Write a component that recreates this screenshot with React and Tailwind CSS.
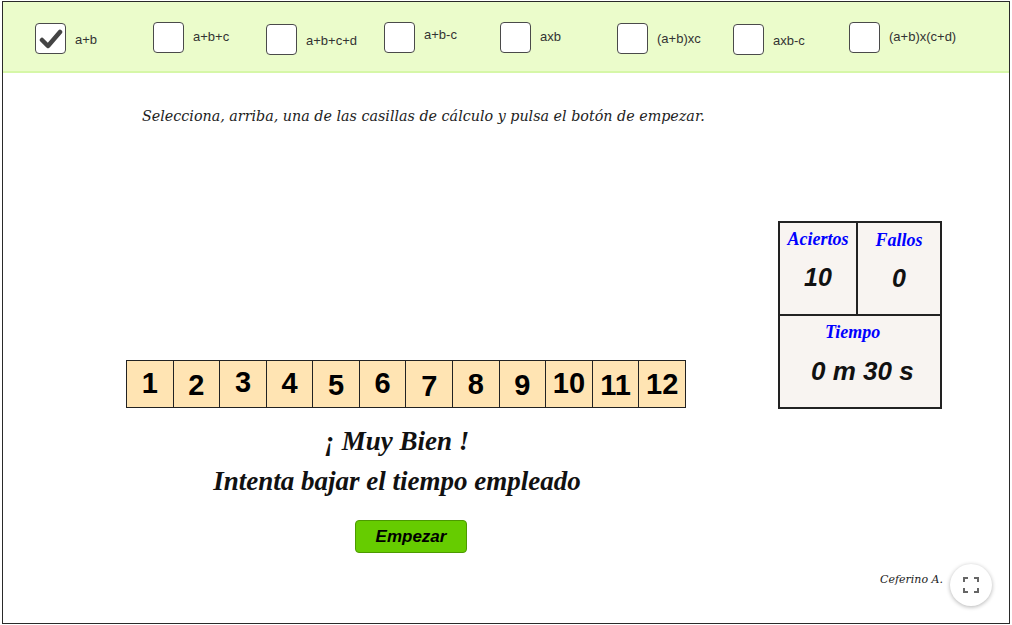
import React, { useState } from 'react';

const options = [
  { label: 'a+b', w: 'w-[118px]', mt: 'mt-[21px]', lmt: 'mt-[10px]' },
  { label: 'a+b+c', w: 'w-[113px]', mt: 'mt-[20px]', lmt: 'mt-[8px]' },
  { label: 'a+b+c+d', w: 'w-[118px]', mt: 'mt-[22px]', lmt: 'mt-[10px]' },
  { label: 'a+b-c', w: 'w-[116px]', mt: 'mt-[20px]', lmt: 'mt-[6px]' },
  { label: 'axb', w: 'w-[117px]', mt: 'mt-[20px]', lmt: 'mt-[8px]' },
  { label: '(a+b)xc', w: 'w-[116px]', mt: 'mt-[21px]', lmt: 'mt-[9px]' },
  { label: 'axb-c', w: 'w-[116px]', mt: 'mt-[22px]', lmt: 'mt-[10px]' },
  { label: '(a+b)x(c+d)', w: 'w-[140px]', mt: 'mt-[20px]', lmt: 'mt-[8px]' },
];

const cells = [
  { n: 1, y: 'pt-[7px]' },
  { n: 2, y: 'pt-[9px]' },
  { n: 3, y: 'pt-[6px]' },
  { n: 4, y: 'pt-[7px]' },
  { n: 5, y: 'pt-[9px]' },
  { n: 6, y: 'pt-[7px]' },
  { n: 7, y: 'pt-[10px]' },
  { n: 8, y: 'pt-[8px]' },
  { n: 9, y: 'pt-[9px]' },
  { n: 10, y: 'pt-[7px]' },
  { n: 11, y: 'pt-[9px]' },
  { n: 12, y: 'pt-[8px]' },
];

const serif = { fontFamily: '"Liberation Serif", "Times New Roman", serif' };
const sans = { fontFamily: '"Liberation Sans", Arial, sans-serif' };
const book = { fontFamily: '"DejaVu Serif", Georgia, serif' };

function CheckBox({ checked, onClick }) {
  return (
    <button
      onClick={onClick}
      className="w-[31px] h-[31px] rounded-[4px] border-[1.5px] border-[#4a4a4a] bg-white flex items-center justify-center flex-shrink-0"
    >
      {checked && (
        <svg width="24" height="22" viewBox="0 0 24 22">
          <path d="M3 12 L9 18 L21 4" fill="none" stroke="#444" strokeWidth="4.5" strokeLinecap="round" strokeLinejoin="round" />
        </svg>
      )}
    </button>
  );
}

export default function App() {
  const [selected, setSelected] = useState(0);

  return (
    <div className="w-[1012px] h-[625px] bg-white pl-[2px] pt-[1px] overflow-hidden">
      <div className="w-[1008px] h-[623px] border border-[#2a2a2a] flex flex-col relative">
        {/* Top options bar */}
        <div className="h-[71px] bg-[#ebfccb] border-b-2 border-[#d6f7a8] flex items-start pl-[32px] flex-shrink-0">
          {options.map((o, i) => (
            <div key={o.label} className={`flex items-start flex-shrink-0 ${o.w} ${o.mt}`}>
              <CheckBox checked={selected === i} onClick={() => setSelected(i)} />
              <span
                className={`ml-[9px] ${o.lmt} text-[13px] leading-[14px] text-[#333] whitespace-nowrap`}
                style={sans}
              >
                {o.label}
              </span>
            </div>
          ))}
        </div>

        {/* Instructions */}
        <p className="mt-[34px] pl-[139px] text-[14.3px] leading-[18px] italic text-[#222]" style={book}>
          Selecciona, arriba, una de las casillas de cálculo y pulsa el botón de empezar.
        </p>

        <div className="flex items-start mt-[96px]">
          {/* Left column */}
          <div className="ml-[123px] w-[560px] pt-[139px] flex flex-col">
            <div className="flex border border-[#222] bg-[#ffe4b3] h-[48px]">
              {cells.map((c, i) => (
                <div
                  key={c.n}
                  className={`flex-1 flex justify-center ${c.y} ${i > 0 ? 'border-l border-[#222]' : ''}`}
                >
                  <span className="text-[29px] leading-[30px] font-bold text-black" style={sans}>
                    {c.n}
                  </span>
                </div>
              ))}
            </div>

            <div className="w-[542px] text-center italic font-bold text-[27px] text-[#111]" style={serif}>
              <div className="mt-[18px] leading-[30px]">¡ Muy Bien !</div>
              <div className="mt-[10px] leading-[30px]">Intenta bajar el tiempo empleado</div>
            </div>

            <button
              className="ml-[229px] mt-[24px] w-[112px] h-[33px] rounded-[4px] bg-[#66cc00] border border-[#4c9a00] text-[17px] font-bold italic text-black"
              style={sans}
            >
              Empezar
            </button>
          </div>

          {/* Score box */}
          <div className="ml-[92px] w-[164px] h-[188px] border-2 border-[#222] bg-[#f8f4f1] flex flex-col">
            <div className="flex h-[93px] border-b-2 border-[#222]">
              <div className="w-[78px] border-r-2 border-[#222] flex flex-col items-center">
                <span className="mt-[6px] text-[18px] leading-[20px] font-bold italic text-[#0000ff]" style={serif}>
                  Aciertos
                </span>
                <span className="mt-[14px] text-[25px] leading-[28px] font-bold italic text-[#111]" style={sans}>
                  10
                </span>
              </div>
              <div className="flex-1 flex flex-col items-center">
                <span className="mt-[7px] text-[18px] leading-[20px] font-bold italic text-[#0000ff]" style={serif}>
                  Fallos
                </span>
                <span className="mt-[14px] text-[25px] leading-[28px] font-bold italic text-[#111]" style={sans}>
                  0
                </span>
              </div>
            </div>
            <div className="flex flex-col">
              <span className="mt-[6px] ml-[45px] text-[18px] leading-[20px] font-bold italic text-[#0000ff]" style={serif}>
                Tiempo
              </span>
              <span className="mt-[15px] ml-[31px] text-[26px] leading-[28px] font-bold italic text-[#111]" style={sans}>
                0 m 30 s
              </span>
            </div>
          </div>
        </div>

        {/* Footer */}
        <div className="flex-1 flex items-end justify-end pb-[17px] pr-[17px]">
          <span className="mb-[18px] mr-[7px] text-[11px] italic text-[#222]" style={book}>
            Ceferino A.
          </span>
          <button className="w-[42px] h-[42px] rounded-full bg-white shadow-[0_1px_4px_rgba(0,0,0,0.3)] flex items-center justify-center">
            <svg width="16" height="16" viewBox="0 0 16 16" fill="none" stroke="#666" strokeWidth="2">
              <path d="M1 5 V1 H5 M11 1 H15 V5 M15 11 V15 H11 M5 15 H1 V11" />
            </svg>
          </button>
        </div>
      </div>
    </div>
  );
}
